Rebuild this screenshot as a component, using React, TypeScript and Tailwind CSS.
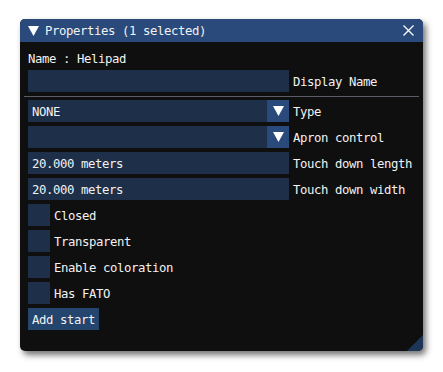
import React from "react";

const font = { fontFamily: '"DejaVu Sans Mono", "Liberation Mono", monospace' };

function Arrow({ w = 10, h = 9 }: { w?: number; h?: number }) {
  return (
    <svg width={w} height={h} viewBox="0 0 10 9" preserveAspectRatio="none">
      <polygon points="0,0 10,0 5,9" fill="#ffffff" />
    </svg>
  );
}

function Field({ text, label, combo }: { text?: string; label: string; combo?: boolean }) {
  return (
    <div className="flex items-center gap-[4px] h-[22px]">
      <div className="flex w-[261px] h-[22px] bg-[#1d2f49]">
        <div className="flex-1 pl-[4px] pt-[1px] leading-[22px] text-[#f2f2f2]">{text}</div>
        {combo && (
          <div className="w-[22px] h-[22px] bg-[#294a7a] flex items-center justify-center">
            <Arrow w={11} h={10} />
          </div>
        )}
      </div>
      <div className="pt-[1px] leading-[22px] text-[#f2f2f2]">{label}</div>
    </div>
  );
}

function Check({ label }: { label: string }) {
  return (
    <div className="flex items-center gap-[4px] h-[22px]">
      <div className="w-[22px] h-[22px] bg-[#1d2f49]" />
      <div className="pt-[1px] leading-[22px] text-[#f2f2f2]">{label}</div>
    </div>
  );
}

export default function App() {
  return (
    <div className="w-[443px] h-[372px] bg-white pt-[19px] pl-[20px]" style={font}>
      <div className="relative w-[403px] h-[332px] bg-[#0f0f0f] rounded-[5px] shadow-[3px_4px_6px_rgba(0,0,0,0.55)] text-[12.3px] tracking-[-0.4px] overflow-hidden">
        <div className="h-[23px] bg-[#294a7a] flex items-center pl-[8px] pr-[8px] text-[#f2f2f2]">
          <Arrow w={11} h={10} />
          <span className="ml-[6px] pt-[1px] leading-[23px]">Properties (1 selected)</span>
          <div className="ml-auto mr-[1px]">
            <svg width="11" height="11" viewBox="0 0 11 11">
              <path d="M0.5 0.5 L10.5 10.5 M10.5 0.5 L0.5 10.5" stroke="#ffffff" strokeWidth="1.3" />
            </svg>
          </div>
        </div>
        <div className="px-[8px] pt-[8px] flex flex-col">
          <div className="h-[16px] pt-[1px] leading-[16px] text-[#f2f2f2]">Name : Helipad</div>
          <div className="mt-[4px]">
            <Field label="Display Name" />
          </div>
          <div className="mt-[4px] -mx-[4px] h-[1px] bg-[#5c5c68]" />
          <div className="mt-[3px] flex flex-col gap-[4px]">
            <Field text="NONE" label="Type" combo />
            <Field label="Apron control" combo />
            <Field text="20.000 meters" label="Touch down length" />
            <Field text="20.000 meters" label="Touch down width" />
            <Check label="Closed" />
            <Check label="Transparent" />
            <Check label="Enable coloration" />
            <Check label="Has FATO" />
            <div className="flex">
              <div className="h-[22px] px-[4px] pt-[1px] leading-[22px] bg-[#24456d] text-[#f2f2f2]">Add start</div>
            </div>
          </div>
        </div>
        <svg className="absolute right-0 bottom-0" width="16" height="16" viewBox="0 0 16 16">
          <polygon points="16,0 16,16 0,16" fill="#1d3556" />
        </svg>
      </div>
    </div>
  );
}
